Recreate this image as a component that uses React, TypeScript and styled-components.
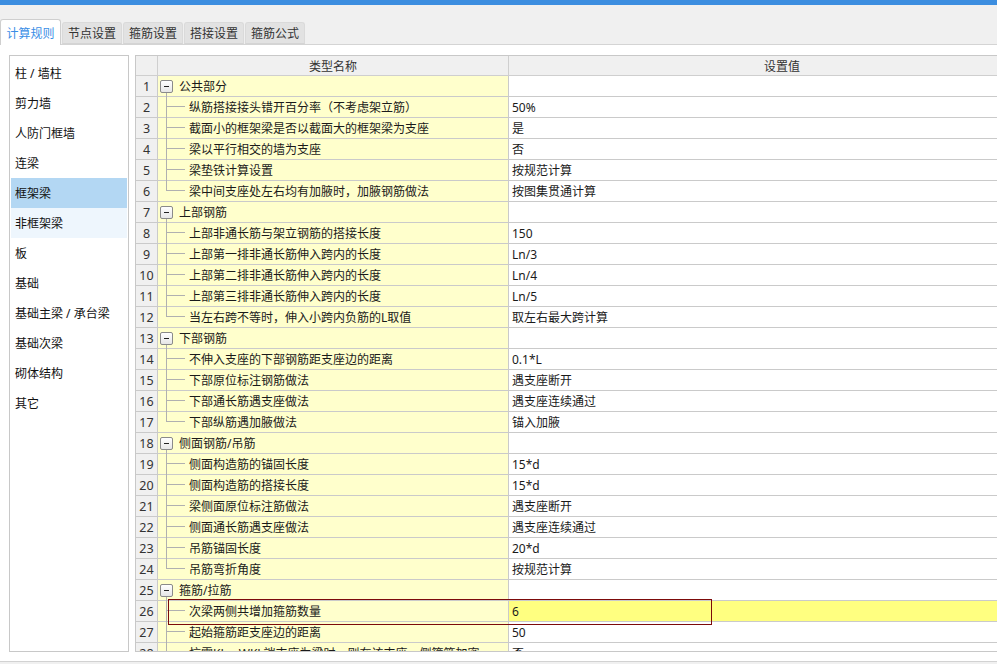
import React from "react";
import styled, { createGlobalStyle } from "styled-components";

const Global = createGlobalStyle`
  html, body { margin: 0; padding: 0; height: 100%; overflow: hidden; }
  body { font-family: "Noto Sans", "Noto Sans CJK SC", sans-serif; font-size: 12px; color: #1a1a1a; background: #fff; }
  #root { height: 100%; }
  * { box-sizing: border-box; }
`;

const Page = styled.div`
  height: 664px;
  display: flex;
  flex-direction: column;
  overflow: hidden;
`;

const TopBar = styled.div`
  height: 5px;
  background: #3c8ee0;
  flex: none;
`;

const TabStrip = styled.div`
  height: 40px;
  flex: none;
  background: #f0f0f0;
  display: flex;
  align-items: flex-end;
  gap: 1px;
  border-bottom: 1px solid #d4d4d4;
`;

const Tab = styled.div<{ $active?: boolean }>`
  width: ${(p) => (p.$active ? "61px" : "60px")};
  height: ${(p) => (p.$active ? "26px" : "22px")};
  margin-bottom: ${(p) => (p.$active ? "-1px" : "0")};
  background: ${(p) => (p.$active ? "#fff" : "#e2e2e2")};
  color: ${(p) => (p.$active ? "#3a8ee6" : "#333")};
  border: 1px solid ${(p) => (p.$active ? "#cfcfcf" : "#dadada")};
  border-bottom: ${(p) => (p.$active ? "none" : "1px solid #d4d4d4")};
  border-radius: 3px 3px 0 0;
  display: flex;
  align-items: center;
  justify-content: center;
  font-size: 12px;
  padding-top: ${(p) => (p.$active ? "1px" : "0")};
`;

const Content = styled.div`
  flex: 1;
  display: flex;
  gap: 6px;
  padding: 10px 0 9px 9px;
  min-height: 0;
  background: #fff;
`;

const Sidebar = styled.div`
  width: 120px;
  flex: none;
  border: 1px solid #c8c8c8;
  padding: 2px 1px;
  display: flex;
  flex-direction: column;
`;

const SideItem = styled.div<{ $state?: "sel" | "hover" }>`
  height: 30px;
  display: flex;
  align-items: center;
  padding-left: 4px;
  background: ${(p) =>
    p.$state === "sel" ? "#b3d7f3" : p.$state === "hover" ? "#eef6fd" : "transparent"};
  color: #111;
`;

const TableWrap = styled.div`
  flex: 1;
  min-width: 0;
  overflow: hidden;
  border: 1px solid #c8c8c8;
  border-right: none;
`;

const Table = styled.div`
  width: 920px;
`;

const Row = styled.div<{ $header?: boolean; $focus?: boolean }>`
  position: relative;
  z-index: ${(p) => (p.$focus ? 2 : "auto")};
  display: grid;
  grid-template-columns: 22px 351px 1fr;
  height: ${(p) => (p.$header ? "20px" : "21px")};
  border-bottom: 1px solid ${(p) => (p.$header ? "#cfcfcf" : "#cacaca")};
  background: ${(p) => (p.$header ? "#f0f0f0" : "transparent")};
`;

const NumCell = styled.div`
  background: #f0f0f0;
  border-right: 1px solid #cacaca;
  display: flex;
  align-items: center;
  justify-content: center;
  color: #333;
  font-size: 12.5px;
`;

const HeadCell = styled.div`
  border-right: 1px solid #cfcfcf;
  display: flex;
  align-items: center;
  justify-content: center;
  color: #333;
`;

const NameCell = styled.div<{ $group?: boolean }>`
  position: relative;
  background: #ffffcc;
  border-right: 1px solid #cacaca;
  display: flex;
  align-items: center;
  padding-left: ${(p) => (p.$group ? "21px" : "31px")};
  white-space: nowrap;
  overflow: visible;
`;

const ValueCell = styled.div<{ $hl?: boolean }>`
  background: ${(p) => (p.$hl ? "#ffff80" : "#fff")};
  display: flex;
  align-items: center;
  padding-left: 3px;
  white-space: nowrap;
`;

const Toggle = styled.span`
  position: absolute;
  left: 2px;
  top: 4px;
  width: 13px;
  height: 13px;
  border: 1px solid #8a8a8a;
  border-radius: 2px;
  background: linear-gradient(#ffffff, #e6e6e6);
  &::before {
    content: "";
    position: absolute;
    left: 3px;
    top: 5px;
    width: 5px;
    height: 1px;
    background: #222;
  }
  &::after {
    content: "";
    position: absolute;
    left: 5px;
    top: 12px;
    width: 1px;
    height: 5px;
    background: #b0b0b0;
  }
`;

const Branch = styled.span<{ $last?: boolean }>`
  position: absolute;
  left: 8px;
  top: -1px;
  width: 18px;
  height: ${(p) => (p.$last ? "11px" : "22px")};
  border-left: 1px solid #b0b0b0;
  &::after {
    content: "";
    position: absolute;
    left: 0;
    top: 10px;
    width: 18px;
    height: 1px;
    background: #b0b0b0;
  }
`;

const FocusRect = styled.div`
  position: absolute;
  z-index: 3;
  left: 32px;
  top: -2px;
  width: 544px;
  height: 26px;
  border: 1px solid #7c0a0a;
  pointer-events: none;
`;

const Footer = styled.div`
  height: 3px;
  flex: none;
  background: #f0f0f0;
  border-top: 1px solid #d2d2d2;
`;

type RowData = { name: string; value?: string; group?: boolean; last?: boolean };

const rows: RowData[] = [
  { name: "公共部分", group: true },
  { name: "纵筋搭接接头错开百分率（不考虑架立筋）", value: "50%" },
  { name: "截面小的框架梁是否以截面大的框架梁为支座", value: "是" },
  { name: "梁以平行相交的墙为支座", value: "否" },
  { name: "梁垫铁计算设置", value: "按规范计算" },
  { name: "梁中间支座处左右均有加腋时，加腋钢筋做法", value: "按图集贯通计算", last: true },
  { name: "上部钢筋", group: true },
  { name: "上部非通长筋与架立钢筋的搭接长度", value: "150" },
  { name: "上部第一排非通长筋伸入跨内的长度", value: "Ln/3" },
  { name: "上部第二排非通长筋伸入跨内的长度", value: "Ln/4" },
  { name: "上部第三排非通长筋伸入跨内的长度", value: "Ln/5" },
  { name: "当左右跨不等时，伸入小跨内负筋的L取值", value: "取左右最大跨计算", last: true },
  { name: "下部钢筋", group: true },
  { name: "不伸入支座的下部钢筋距支座边的距离", value: "0.1*L" },
  { name: "下部原位标注钢筋做法", value: "遇支座断开" },
  { name: "下部通长筋遇支座做法", value: "遇支座连续通过" },
  { name: "下部纵筋遇加腋做法", value: "锚入加腋", last: true },
  { name: "侧面钢筋/吊筋", group: true },
  { name: "侧面构造筋的锚固长度", value: "15*d" },
  { name: "侧面构造筋的搭接长度", value: "15*d" },
  { name: "梁侧面原位标注筋做法", value: "遇支座断开" },
  { name: "侧面通长筋遇支座做法", value: "遇支座连续通过" },
  { name: "吊筋锚固长度", value: "20*d" },
  { name: "吊筋弯折角度", value: "按规范计算", last: true },
  { name: "箍筋/拉筋", group: true },
  { name: "次梁两侧共增加箍筋数量", value: "6" },
  { name: "起始箍筋距支座边的距离", value: "50" },
  { name: "抗震KL、WKL端支座为梁时，则在该支座一侧箍筋加密", value: "否" },
];

const sideItems = [
  "柱 / 墙柱",
  "剪力墙",
  "人防门框墙",
  "连梁",
  "框架梁",
  "非框架梁",
  "板",
  "基础",
  "基础主梁 / 承台梁",
  "基础次梁",
  "砌体结构",
  "其它",
];

const tabs = ["计算规则", "节点设置", "箍筋设置", "搭接设置", "箍筋公式"];

export default function App() {
  return (
    <Page>
      <Global />
      <TopBar />
      <TabStrip>
        {tabs.map((t, i) => (
          <Tab key={t} $active={i === 0}>
            {t}
          </Tab>
        ))}
      </TabStrip>
      <Content>
        <Sidebar>
          {sideItems.map((s, i) => (
            <SideItem key={s} $state={i === 4 ? "sel" : i === 5 ? "hover" : undefined}>
              {s}
            </SideItem>
          ))}
        </Sidebar>
        <TableWrap>
          <Table>
            <Row $header>
              <HeadCell />
              <HeadCell>类型名称</HeadCell>
              <HeadCell>设置值</HeadCell>
            </Row>
            {rows.map((r, i) => {
              const n = i + 1;
              const selected = n === 26;
              return (
                <Row key={n} $focus={selected}>
                  <NumCell>{n}</NumCell>
                  <NameCell $group={r.group}>
                    {r.group ? <Toggle /> : <Branch $last={r.last} />}
                    {r.name}
                  </NameCell>
                  <ValueCell $hl={selected}>{r.value ?? ""}</ValueCell>
                  {selected && <FocusRect />}
                </Row>
              );
            })}
          </Table>
        </TableWrap>
      </Content>
      <Footer />
    </Page>
  );
}
